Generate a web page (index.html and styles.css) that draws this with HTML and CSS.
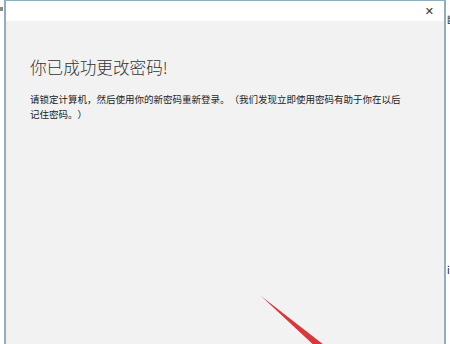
FILE: index.html
```html
<!DOCTYPE html>
<html lang="zh-CN">
<head>
    <meta charset="UTF-8">
    <title>更改密码</title>
    <link rel="stylesheet" href="styles.css">
</head>
<body>
    <div class="page">
        <div class="edge-left"><span class="mark"></span></div>

        <div class="window">
            <div class="titlebar">
                <span class="close">&#x2715;</span>
            </div>
            <div class="content">
                <h1 class="title">你已成功更改密码!</h1>
                <p class="message">请锁定计算机，然后使用你的新密码重新登录。（我们发现立即使用密码有助于你在以后记住密码。）</p>
            </div>
        </div>

        <div class="edge-right">
            <span class="glyph top">断</span>
            <span class="glyph bottom">i</span>
        </div>
    </div>

    <svg class="arrow" width="80" height="60" viewBox="0 0 80 60">
        <polygon points="0,0 63,49 58,54" fill="#d8383b"/>
    </svg>
</body>
</html>
```

FILE: styles.css
```css
* {
    padding: 0;
    margin: 0;
    box-sizing: border-box;
}

body {
    background-color: #ffffff;
    width: 450px;
    height: 344px;
    overflow: hidden;
    font-family: "Noto Sans CJK SC", "Noto Sans", sans-serif;
    position: relative;
}

.page {
    display: flex;
    height: 344px;
}

.edge-left {
    width: 4px;
    position: relative;
}

.edge-left .mark {
    position: absolute;
    left: 0;
    top: 7px;
    width: 3px;
    height: 4px;
    background-color: #8a8a8a;
}

.window {
    width: 442px;
    height: 344px;
    border: 1px solid #8fafbd;
    border-width: 1px 2px 0 2px;
    display: flex;
    flex-direction: column;
}

.titlebar {
    height: 20px;
    background-color: #ffffff;
    display: flex;
    justify-content: flex-end;
    align-items: center;
    padding-right: 10px;
}

.close {
    font-family: "DejaVu Sans", sans-serif;
    font-size: 11px;
    color: #333333;
    line-height: 1;
    margin-top: 1px;
}

.content {
    flex: 1;
    background-color: #f2f2f2;
    border-left: 2px solid #f7ede6;
    padding: 34px 18px 0 22px;
}

.title {
    font-size: 16.6px;
    font-weight: 300;
    color: #333333;
    line-height: 24px;
    margin-bottom: 13px;
}

.message {
    font-size: 9.5px;
    line-height: 15px;
    color: #222222;
    width: 374px;
    text-spacing-trim: space-all;
}

.edge-right {
    flex: 1;
    position: relative;
    overflow: hidden;
}

.glyph {
    position: absolute;
    left: 1px;
    font-size: 10px;
    color: #222222;
}

.glyph.top {
    top: 12px;
}

.glyph.bottom {
    top: 262px;
}

.arrow {
    position: absolute;
    left: 261px;
    top: 296px;
}
```
